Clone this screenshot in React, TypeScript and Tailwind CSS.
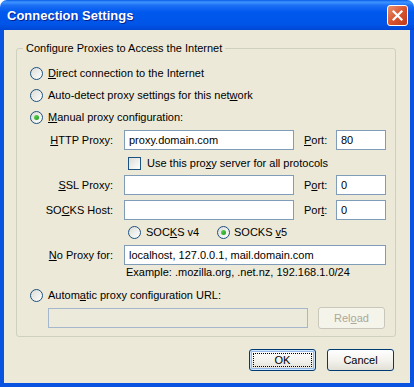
import clsx from 'clsx'

function Radio({ checked }: { checked?: boolean }) {
  return (
    <span className="flex size-[13px] shrink-0 items-center justify-center rounded-full border border-[#1C5180] bg-linear-to-br from-[#DCDCD7] to-white">
      {checked && (
        <span className="size-[5px] rounded-full bg-linear-to-br from-[#5BDA57] to-[#1E9A1E]" />
      )}
    </span>
  )
}

function Checkbox() {
  return (
    <span className="size-[13px] shrink-0 border border-[#1C5180] bg-linear-to-br from-[#DCDCD7] to-white" />
  )
}

function TextBox({ value, className, disabled }: { value?: string; className?: string; disabled?: boolean }) {
  return (
    <div
      className={clsx(
        'flex h-[20px] shrink-0 items-center border pl-[4px] text-black',
        disabled ? 'border-[#A5B7CC] bg-[#EBEADB]' : 'border-[#7F9DB9] bg-white',
        className,
      )}
    >
      {value}
    </div>
  )
}

function FieldLabel({ children }: { children: React.ReactNode }) {
  return <span className="w-[85px] shrink-0 pr-[2px] text-right">{children}</span>
}

function PortLabel({ children }: { children: React.ReactNode }) {
  return <span className="ml-[10px] w-[32px] shrink-0">{children}</span>
}

function TitleBar() {
  return (
    <div className="flex h-[30px] shrink-0 items-center rounded-t-[7px] bg-[linear-gradient(to_bottom,#0A5CE8_0%,#3D95FF_7%,#1C6FF5_18%,#0058EE_40%,#0055E8_80%,#0047D6_100%)]">
      <span className="pl-[7px] text-[13px] font-bold text-white [text-shadow:1px_1px_#0A1E8C]">
        Connection Settings
      </span>
      <div className="ml-auto mr-[6px] flex size-[21px] items-center justify-center rounded-[3px] border border-white bg-linear-to-br from-[#E9906F] via-[#D9542F] to-[#C0391A]">
        <svg width="11" height="11" viewBox="0 0 11 11">
          <path d="M1.5 1.5 L9.5 9.5 M9.5 1.5 L1.5 9.5" stroke="white" strokeWidth="2.2" strokeLinecap="square" />
        </svg>
      </div>
    </div>
  )
}

function XpButton({ children, isDefault, disabled }: { children: React.ReactNode; isDefault?: boolean; disabled?: boolean }) {
  return (
    <div
      className={clsx(
        'flex h-[22px] w-[67px] shrink-0 rounded-[3px] border p-[3px]',
        disabled
          ? 'h-[20px] w-[66px] border-[#C9C7BA] bg-[#F5F4EA] text-[#ACA899]'
          : 'border-[#003C74] bg-linear-to-b from-white via-[#F4F3EE] to-[#E2E0D6] text-black',
        isDefault && 'shadow-[inset_0_0_0_1px_#CEE7FF,inset_0_0_0_2px_#98B8EA]',
      )}
    >
      <span
        className={clsx(
          'flex flex-1 items-center justify-center border',
          isDefault ? 'border-dotted border-black' : 'border-transparent',
        )}
      >
        {children}
      </span>
    </div>
  )
}

export default function App() {
  return (
    <div className="flex h-[387px] w-[414px] flex-col bg-white font-['Liberation_Sans',Arial,sans-serif] text-[11px] leading-[13px] text-black">
      <TitleBar />
      <div className="flex flex-1 flex-col border-x-4 border-b-4 border-[#0A52E0] bg-[#ECE9D8]">
        <fieldset className="ml-[12px] mt-[12px] w-[380px] rounded-[3px] border border-[#D0D0BF] pb-[8px] pl-[6px] pt-[7px]">
          <legend className="px-[3px]">Configure Proxies to Access the Internet</legend>
          <div className="flex flex-col pl-[7px]">
            <div className="flex h-[22px] items-center gap-[5px]">
              <Radio />
              <span><u>D</u>irect connection to the Internet</span>
            </div>
            <div className="flex h-[22px] items-center gap-[5px]">
              <Radio />
              <span>Auto-detect proxy settings for this net<u>w</u>ork</span>
            </div>
            <div className="flex h-[22px] items-center gap-[5px]">
              <Radio checked />
              <span><u>M</u>anual proxy configuration:</span>
            </div>

            <div className="mt-[2px] flex h-[20px] items-center">
              <FieldLabel><u>H</u>TTP Proxy:</FieldLabel>
              <TextBox value="proxy.domain.com" className="ml-[9px] w-[170px]" />
              <PortLabel><u>P</u>ort:</PortLabel>
              <TextBox value="80" className="w-[50px]" />
            </div>
            <div className="mt-[2px] flex h-[22px] items-center gap-[6px] pl-[98px]">
              <Checkbox />
              <span>Use this pro<u>x</u>y server for all protocols</span>
            </div>
            <div className="mt-[1px] flex h-[20px] items-center">
              <FieldLabel><u>S</u>SL Proxy:</FieldLabel>
              <TextBox className="ml-[9px] w-[170px]" />
              <PortLabel>P<u>o</u>rt:</PortLabel>
              <TextBox value="0" className="w-[50px]" />
            </div>
            <div className="mt-[5px] flex h-[20px] items-center">
              <FieldLabel>SO<u>C</u>KS Host:</FieldLabel>
              <TextBox className="ml-[9px] w-[170px]" />
              <PortLabel>Por<u>t</u>:</PortLabel>
              <TextBox value="0" className="w-[50px]" />
            </div>
            <div className="mt-[3px] flex h-[18px] items-center pl-[98px]">
              <div className="flex w-[89px] items-center gap-[5px]">
                <Radio />
                <span>SOC<u>K</u>S v4</span>
              </div>
              <div className="flex items-center gap-[4px]">
                <Radio checked />
                <span>SOCKS <u>v</u>5</span>
              </div>
            </div>
            <div className="mt-[4px] flex h-[20px] items-center">
              <FieldLabel><u>N</u>o Proxy for:</FieldLabel>
              <TextBox value="localhost, 127.0.0.1, mail.domain.com" className="ml-[9px] w-[262px]" />
            </div>
            <div className="flex h-[14px] items-center pl-[96px]">
              Example: .mozilla.org, .net.nz, 192.168.1.0/24
            </div>

            <div className="mt-[5px] flex h-[22px] items-center gap-[5px]">
              <Radio />
              <span>Autom<u>a</u>tic proxy configuration URL:</span>
            </div>
            <div className="mt-[2px] flex h-[20px] items-center gap-[10px] pl-[18px]">
              <TextBox disabled className="w-[260px]" />
              <XpButton disabled>Rel<u>o</u>ad</XpButton>
            </div>
          </div>
        </fieldset>

        <div className="mt-[12px] flex justify-end gap-[11px] pr-[16px]">
          <XpButton isDefault>OK</XpButton>
          <XpButton>Cancel</XpButton>
        </div>
      </div>
    </div>
  )
}
